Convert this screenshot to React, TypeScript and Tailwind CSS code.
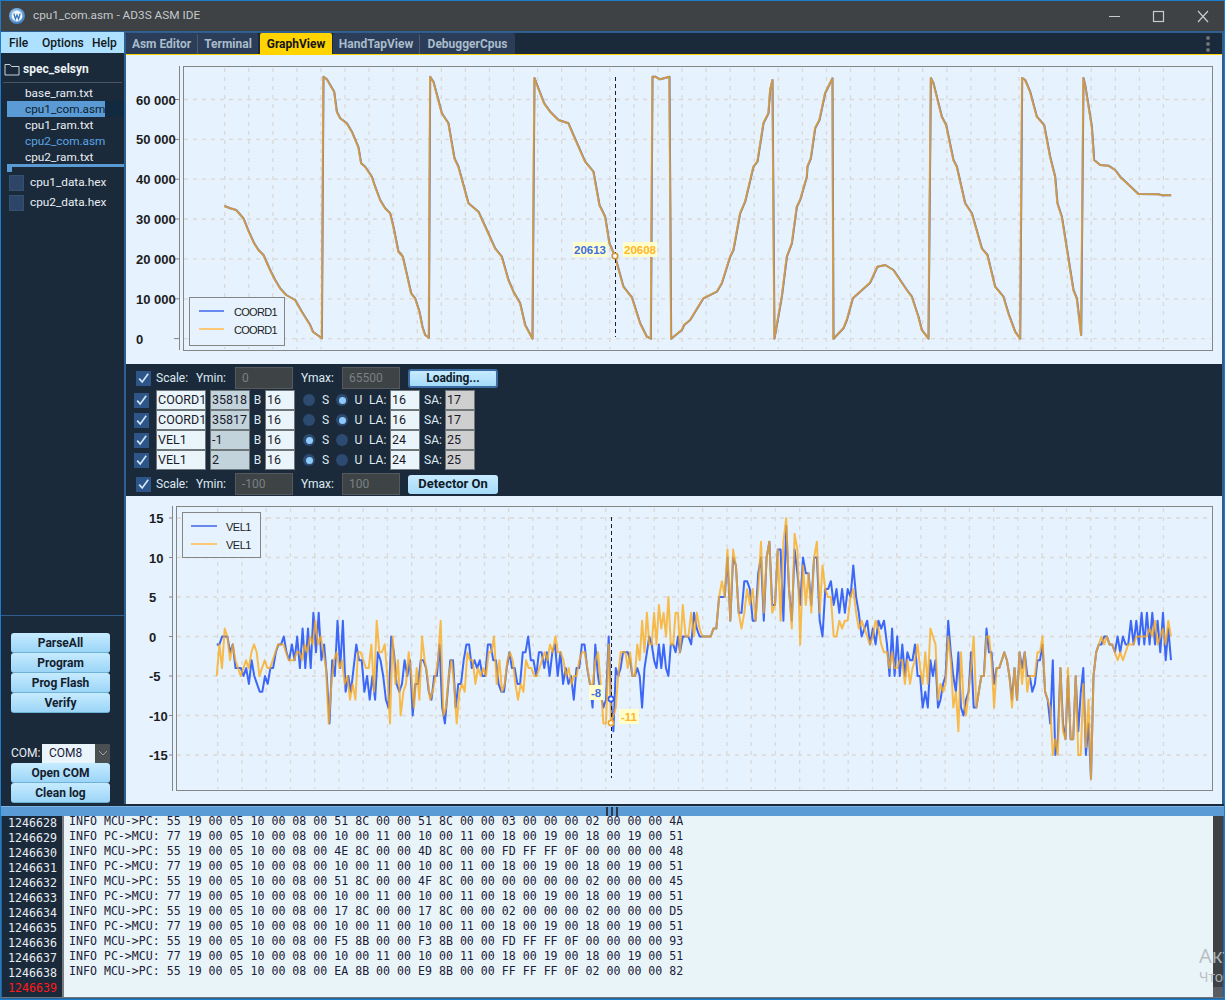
const UI = "font-['Roboto','Noto_Sans',sans-serif]";

// ---------- top chart trace (read from the reference) ----------
const T1: [number, number, number[]][] = [
  [130, 60, [283,438,300,445,318,450,340,475,356,515,372,550,385,570,400,585,420,630,435,660,450,685,468,705,495,720,515,755,540,795,548,815,575,835,580,50,590,58,612,95,620,155,630,175,650,190,665,215,685,262,693,310,705,320,725,350,735,380,750,420,765,445,780,460,790,500,805,575,818,590]],
  [400, 60, [0,578,8,590,33,700,45,715,58,755,67,800,75,825,86,833,90,50,100,65,125,160,145,190,163,295,175,320,190,375,205,430,235,455,260,510,285,565,305,590,325,660,340,695,360,730,375,795,397,836,403,54,432,130,450,155,475,180,505,190,520,225,555,305,580,335,598,435,615,470,628,550,645,590,670,680,695,712,720,790,740,830,752,836,757,50,765,50,780,58,808,50,813,836,845,810,852,795,870,780,910,715,950,695,965,670,990,590,1000,570,1020,460,1035,425,1060,320,1072,305,1090,190,1105,160,1110,90,1117,60,1123,836,1145,710,1160,590,1175,550,1190,440,1200,420]],
  [790, 60, [50,350,52,320,62,295,75,205,88,180,105,100,127,55,130,836,160,805,170,780,188,715,240,668,262,620,285,615,310,630,350,690,365,710,385,770,395,810,415,836,422,54,430,70,455,170,468,195,490,300,500,320,525,430,545,460,575,565,592,585,615,680,640,710,655,760,675,815,690,836,696,54,705,60,720,95,740,170,762,195,780,290,795,350,802,430,815,470,850,690,860,715,873,825,880,54,885,75,905,200,912,300,930,315,955,317,975,330,990,350,1045,402,1105,403,1115,406,1143,406]],
];
const topPts = T1.flatMap(([ox, oy, a]) => {
  const out: string[] = [];
  for (let i = 0; i < a.length; i += 2) out.push(`${(ox + a[i] / 3).toFixed(1)},${(oy + a[i + 1] / 3).toFixed(1)}`);
  return out;
}).join(" ");

// ---------- bottom chart traces ----------
const blueA = [-1,-1,0,0,0,-2,-1,-4,-4,-4,-5,-4,-6,-3,-5,-6,-7,-7,-5,-6,-4,-4,-2,-1,-1,0,-2,-3,-1,-3,0,-4,1,-4,1,-4,3,-2,3,-3,-1,-5,-11,-3,-5,2,-4,2,-7,-5,-7,-4,-1,-3,-3,-7,-5,-8,-5,-8,-2,-3,-5,-8,-9,0,-2,-6,-7,-6,-3,-5,-3,-10,-6,-6,-3,-3,-4,-7,-8,-5,-5,-1,-9,-11,-7,-3,-3,-9,-6,-6,-3,-1,-1,-4,-3,-4,-3,-5,-5,-1,-1,-3,-3,-6,-7,-7,-4,-2,-4,-4,-6,-6,-2,-2,0,-3,-3,-5,-2,-2,-4,-2,-5,-2,-1,-5,-2,-6,-4,-6,-5,-8,-4,-4,-1,-1,-4,-6,-9,-1,-5,-7,-9,-8,0];
const orangeA = [-5,-1,-4,1,0,-3,-1,-3,-4,-5,-4,-3,-4,-2,-1,-2,-5,-4,-3,-4,-4,-3,-2,-1,-1,-1,-2,-3,-3,-3,-2,-2,-3,-1,-2,0,-1,2,-1,0,-2,-4,-11,-6,-3,-2,-4,-3,-6,-5,-8,-6,-8,-2,-2,-3,-4,-4,-1,-7,2,-2,-2,-1,-5,-11,0,-6,-3,-10,-7,-6,-2,-5,-9,-4,-8,0,-3,-5,-8,-7,-5,-3,2,-10,-9,-5,-3,-6,-11,-7,-6,-7,-2,-3,-3,-6,-4,-5,-4,-5,-2,-2,0,-6,-3,-7,-6,-3,-2,-3,-6,-8,-6,-7,-3,-4,-4,-5,-5,-4,-3,-2,-3,-1,-2,0,-2,-2,-3,-5,-4,-6,-5,-5,-3,-2,-2,-4,-6,-6,-3,-2,-6,-11,-11,-1];
const blueB = [-8,-12,-4,-5,-4,-2,-2,-2,-3,-5,-5,-4,-5,-9,-4,-2,0,-1,-3,-4,-1,-4,-1,-4,-5,-1,-1,-2,0];
const orangeB = [-11,-10,-9,-5,-2,-2,-2,-4,-2,-5,-5,-1,-3,2,-2,3,-1,-1,3,-1,4,1,3,0,5,-1,-1,3,3];
const blueC1 = [-2,0,0,0,-1,3,1,0,0,0,0,0,1,1,5,5,5,10,2,10,9,3,3,7,7,6,2,2,8,10,2,10,12,4,4,11,11,2,14,6,2,11,8,4,10,8,8,4,10,10,2,0,6,6,7,4,6,3,6,3,6,5,9,5,3,0,1,2,-1,1,-1,2,1,2];
const blueC2 = [-1,-5,1,-5,0,-5,-1,-5,-2,-3,-3,-1,-5,-5,-9,-7,-9,-3,-5,-3,-9,-8,-6,-5,2,-2,-5,-7,-2,-9,-10,-8,-7,-2,-9,-9,-7,-5,-5,1,-2,-2,-6,-4,-4,-3,-2,-3,-5,-8,-4,-8,-2,-4,-2,-5,-5,-7,-6,-3,-3,-1,-7,-8,-11,-3,-15,-13,-4,-11,-13,-5,-13,-13,-5,-12,-7,-4,-15,-11,-18];
const blueC3 = [-5,-2,-1,-1,0,0,-1,-1,-2,0,-2,0,-1,-1,2,-1,2,-1,3,-1,3,-1,3,-1,2,-2,3,-3,1,-3];
const orangeC1 = [-2,4,0,0,3,0,3,1,0,0,0,0,1,1,5,7,5,11,2,11,9,3,1,3,6,4,6,2,6,12,3,10,12,3,4,11,2,12,15,6,1,13,11,-1,9,4,8,3,10,12,3,9,6,5,5,0,0,2,1,2,2,5,6,3,1,2,1,0,-1,0,2,1,-1,-2];
const orangeC2 = [-2,-4,-2,-4,-4,-3,-3,-6,-3,-6,-4,-3,-1,-4,-6,-2,-6,1,0,-1,-8,-6,-7,-6,0,-3,-9,-7,-12,-2,-8,-10,-7,-4,0,-9,-7,-5,-5,0,0,-3,-9,-4,-4,-3,-2,-3,-5,-9,-4,-8,-2,-6,-2,-7,-5,-5,-5,-2,-2,0,-7,-8,-9,-15,-13,-15,-4,-12,-13,-4,-13,-13,-5,-15,-15,-6,-14,-8,-18];
const orangeC3 = [-5,-2,-1,0,-1,0,-1,-1,-2,-3,-2,-3,-2,-1,-1,-1,0,0,0,0,0,1,0,2,-1,0,1,-1,2,0];

const vy = (v: number) => (636.5 - 7.9 * v).toFixed(1);
const seq = (x0: number, x1: number, a: number[]) =>
  a.map((v, i) => `${(x0 + (i * (x1 - x0)) / (a.length - 1)).toFixed(1)},${vy(v)}`);
const bluePts = [...seq(216.7, 608.7, blueA), ...seq(611, 678, blueB), ...seq(680, 884, blueC1), ...seq(887, 1091, blueC2), ...seq(1093.5, 1171, blueC3)].join(" ");
const orangePts = [...seq(216.7, 608.7, orangeA), ...seq(611, 678, orangeB), ...seq(680, 884, orangeC1), ...seq(887, 1091, orangeC2), ...seq(1093.5, 1171, orangeC3)].join(" ");

// ---------- shared pieces ----------
const Check = ({ size = 15 }: { size?: number }) => (
  <span className="shrink-0 flex items-center justify-center bg-[#2d5587]" style={{ width: size, height: size }}>
    <svg width={size} height={size} viewBox="0 0 15 15" fill="none">
      <path d="M3.2 7.6 L6.2 11 L12.2 2.8" stroke="#cfe6fb" strokeWidth="1.7" />
    </svg>
  </span>
);

const Radio = ({ on }: { on?: boolean }) => (
  <span className="shrink-0 w-3 h-3 rounded-full bg-[#2d4a70] flex items-center justify-center">
    {on && <span className="w-[7px] h-[7px] rounded-full bg-[#8ec9fb]" />}
  </span>
);

const SideBtn = ({ label }: { label: string }) => (
  <div className="w-[99px] h-5 rounded-[3px] border-b border-[#6fb2d8] bg-gradient-to-b from-[#c6ebff] to-[#9bd5f7] flex items-center justify-center text-[12px] font-bold text-[#14202e] leading-none">
    {label}
  </div>
);

const Field = ({ w, text, cls }: { w: string; text: string; cls: string }) => (
  <div className={`${w} h-5 shrink-0 border border-[#6f7679] pl-[1px] text-[12.5px] leading-[18px] text-[#1a1a2a] overflow-hidden whitespace-nowrap ${cls}`}>
    {text}
  </div>
);

const SigRow = ({ name, val, signed, la, sa }: { name: string; val: string; signed?: boolean; la: string; sa: string }) => (
  <div className="flex items-center h-5 text-[12px] text-[#dfeaf2]">
    <span className="w-[8px]" />
    <Check />
    <span className="w-[7px]" />
    <Field w="w-[50px]" text={name} cls="bg-[#eaf5fb]" />
    <span className="w-[4px]" />
    <Field w="w-[40px]" text={val} cls="bg-[#c3d3dc]" />
    <span className="w-[15px] text-center">B</span>
    <Field w="w-[30px]" text="16" cls="bg-[#eaf5fb]" />
    <span className="w-[8px]" />
    <Radio on={signed} />
    <span className="w-[21px] text-center">S</span>
    <Radio on={!signed} />
    <span className="w-[21px] text-center">U</span>
    <span className="w-[21px]">LA:</span>
    <Field w="w-[30px]" text={la} cls="bg-[#eaf5fb]" />
    <span className="w-[4px]" />
    <span className="w-[21px]">SA:</span>
    <Field w="w-[30px]" text={sa} cls="bg-[#cfcfcf]" />
  </div>
);

const ScaleRow = ({ min, max, btn, loading }: { min: string; max: string; btn: string; loading?: boolean }) => (
  <div className="flex items-center h-[22px] text-[12px] text-[#dfeaf2]">
    <span className="w-[10px]" />
    <Check />
    <span className="w-[5px]" />
    <span className="w-[40px]">Scale:</span>
    <span className="w-[39px]">Ymin:</span>
    <div className="w-[58px] h-[22px] bg-[#3e4346] border border-[#55595c] pl-[6px] leading-5 text-[#7b8083]">{min}</div>
    <span className="w-[8px]" />
    <span className="w-[41px]">Ymax:</span>
    <div className="w-[58px] h-[22px] bg-[#3e4346] border border-[#55595c] pl-[6px] leading-5 text-[#7b8083]">{max}</div>
    <span className="w-[8px]" />
    <div className={`w-[90px] h-[19px] rounded-[3px] flex items-center justify-center font-bold text-[#101a28] bg-gradient-to-b from-[#c6ebff] to-[#a5dbf9] ${loading ? "border-2 border-[#3b6ba3] text-[12px]" : "text-[13px]"}`}>
      {btn}
    </div>
  </div>
);

const Grid = ({ xs, ys, y0, y1, x0, x1 }: { xs: number[]; ys: number[]; y0: number; y1: number; x0: number; x1: number }) => (
  <g stroke="#dcd8d4" strokeWidth="1.3" strokeDasharray="4 5">
    {xs.map((x) => <line key={`x${x}`} x1={x} x2={x} y1={y0} y2={y1} />)}
    {ys.map((y) => <line key={`y${y}`} x1={x0} x2={x1} y1={y} y2={y} />)}
  </g>
);

const Tip = ({ x, y, w, text, color }: { x: number; y: number; w: number; text: string; color: string }) => (
  <g>
    <rect x={x} y={y} width={w} height={15} fill="#ffffcc" />
    <text x={x + w / 2} y={y + 11.5} textAnchor="middle" fontFamily="'Liberation Sans',sans-serif" fontWeight="700" fontSize="11.5" fill={color}>{text}</text>
  </g>
);

const axisFont = "'Liberation Sans',sans-serif";
const BLUE = "#2450e0";
const ORANGE = "#fbab1a";

const TopChart = () => {
  const xs = Array.from({ length: 40 }, (_, i) => 224.7 + i * 24.07);
  const ys = [99.5, 139.4, 179.2, 219, 258.9, 298.8, 338.6];
  const labels = ["60 000", "50 000", "40 000", "30 000", "20 000", "10 000", "0"];
  return (
    <svg className="block" width="1096" height="309" viewBox="126 55 1096 309">
      <rect x="126" y="55" width="1096" height="309" fill="#e6f3ff" />
      <Grid xs={xs} ys={ys} y0={68} y1={349} x0={184} x1={1211} />
      <rect x="183.5" y="66.5" width="1029" height="284" fill="none" stroke="#858585" strokeWidth="1" />
      <line x1="179.5" x2="179.5" y1="66" y2="350" stroke="#858585" />
      {ys.map((y, i) => (
        <g key={y}>
          <line x1="174" x2="179" y1={y} y2={y} stroke="#858585" />
          <text x="136" y={y + 5} fontFamily={axisFont} fontWeight="700" fontSize="13" fill="#1c1c1c">{labels[i]}</text>
        </g>
      ))}
      <polyline points={topPts} transform="translate(0.2 0)" fill="none" stroke={BLUE} strokeOpacity="0.9" strokeWidth="2" strokeLinejoin="round" />
      <polyline points={topPts} fill="none" stroke={ORANGE} strokeOpacity="0.76" strokeWidth="2" strokeLinejoin="round" />
      <line x1="615.5" x2="615.5" y1="77" y2="337" stroke="#1c1c2c" strokeDasharray="4 3" />
      <circle cx="615" cy="256" r="2.8" fill="#fff" stroke="#d19434" strokeWidth="1.6" />
      <Tip x={573} y={242} w={34} text="20613" color="#3f6de4" />
      <Tip x={623} y={242} w={34} text="20608" color="#ffb52a" />
      <rect x="189.5" y="297.5" width="95" height="48" fill="#e6f3ff" stroke="#858585" />
      <line x1="199" x2="224" y1="311" y2="311" stroke="#5a7cf0" strokeWidth="1.8" />
      <line x1="199" x2="224" y1="329" y2="329" stroke="#ffc266" strokeWidth="1.8" />
      <text x="234" y="316" fontFamily={axisFont} fontSize="11" letterSpacing="-0.7" fill="#222">COORD1</text>
      <text x="234" y="334" fontFamily={axisFont} fontSize="11" letterSpacing="-0.7" fill="#222">COORD1</text>
    </svg>
  );
};

const BottomChart = () => {
  const xs = Array.from({ length: 40 }, (_, i) => 217.7 + i * 24.25);
  const vals = [15, 10, 5, 0, -5, -10, -15];
  return (
    <svg className="block" width="1096" height="308" viewBox="126 496 1096 308">
      <rect x="126" y="496" width="1096" height="308" fill="#e6f3ff" />
      <Grid xs={xs} ys={vals.map((v) => 636.5 - 7.9 * v)} y0={508} y1={789} x0={177} x1={1211} />
      <rect x="176.5" y="506.5" width="1036" height="284" fill="none" stroke="#858585" />
      <line x1="172.5" x2="172.5" y1="506" y2="791" stroke="#858585" />
      {vals.map((v) => (
        <g key={v}>
          <line x1="169" x2="172" y1={636.5 - 7.9 * v} y2={636.5 - 7.9 * v} stroke="#858585" />
          <text x="149" y={636.5 - 7.9 * v + 5} fontFamily={axisFont} fontWeight="700" fontSize="13" fill="#1c1c1c">{v}</text>
        </g>
      ))}
      <polyline points={bluePts} fill="none" stroke="#2a58f5" strokeOpacity="0.9" strokeWidth="2" strokeLinejoin="round" />
      <polyline points={orangePts} fill="none" stroke={ORANGE} strokeOpacity="0.78" strokeWidth="2" strokeLinejoin="round" />
      <line x1="611.5" x2="611.5" y1="517" y2="778" stroke="#1c1c2c" strokeDasharray="4 3" />
      <circle cx="611" cy="699" r="2.6" fill="#fff" stroke="#2c5cf5" strokeWidth="1.6" />
      <circle cx="611" cy="723" r="2.6" fill="#fff" stroke="#f0a52a" strokeWidth="1.6" />
      <Tip x={589} y={685} w={14} text="-8" color="#3f6de4" />
      <Tip x={619} y={709} w={20} text="-11" color="#ffb52a" />
      <rect x="182.5" y="512.5" width="78" height="45" fill="#e6f3ff" stroke="#858585" />
      <line x1="191" x2="217" y1="526" y2="526" stroke="#5a7cf0" strokeWidth="1.8" />
      <line x1="191" x2="217" y1="544" y2="544" stroke="#ffc266" strokeWidth="1.8" />
      <text x="226" y="531" fontFamily={axisFont} fontSize="11" letterSpacing="-0.5" fill="#222">VEL1</text>
      <text x="226" y="549" fontFamily={axisFont} fontSize="11" letterSpacing="-0.5" fill="#222">VEL1</text>
    </svg>
  );
};

const LOG = [
  ["1246628", "INFO MCU->PC: 55 19 00 05 10 00 08 00 51 8C 00 00 51 8C 00 00 03 00 00 00 02 00 00 00 4A"],
  ["1246629", "INFO PC->MCU: 77 19 00 05 10 00 08 00 10 00 11 00 10 00 11 00 18 00 19 00 18 00 19 00 51"],
  ["1246630", "INFO MCU->PC: 55 19 00 05 10 00 08 00 4E 8C 00 00 4D 8C 00 00 FD FF FF 0F 00 00 00 00 48"],
  ["1246631", "INFO PC->MCU: 77 19 00 05 10 00 08 00 10 00 11 00 10 00 11 00 18 00 19 00 18 00 19 00 51"],
  ["1246632", "INFO MCU->PC: 55 19 00 05 10 00 08 00 51 8C 00 00 4F 8C 00 00 00 00 00 00 02 00 00 00 45"],
  ["1246633", "INFO PC->MCU: 77 19 00 05 10 00 08 00 10 00 11 00 10 00 11 00 18 00 19 00 18 00 19 00 51"],
  ["1246634", "INFO MCU->PC: 55 19 00 05 10 00 08 00 17 8C 00 00 17 8C 00 00 02 00 00 00 02 00 00 00 D5"],
  ["1246635", "INFO PC->MCU: 77 19 00 05 10 00 08 00 10 00 11 00 10 00 11 00 18 00 19 00 18 00 19 00 51"],
  ["1246636", "INFO MCU->PC: 55 19 00 05 10 00 08 00 F5 8B 00 00 F3 8B 00 00 FD FF FF 0F 00 00 00 00 93"],
  ["1246637", "INFO PC->MCU: 77 19 00 05 10 00 08 00 10 00 11 00 10 00 11 00 18 00 19 00 18 00 19 00 51"],
  ["1246638", "INFO MCU->PC: 55 19 00 05 10 00 08 00 EA 8B 00 00 E9 8B 00 00 FF FF FF 0F 02 00 00 00 82"],
  ["1246639", ""],
];

const FILES = [
  { n: "base_ram.txt" },
  { n: "cpu1_com.asm", sel: true },
  { n: "cpu1_ram.txt" },
  { n: "cpu2_com.asm", blue: true },
  { n: "cpu2_ram.txt" },
];

const Tab = ({ label, w, active, sep }: { label: string; w: string; active?: boolean; sep?: boolean }) => (
  <div className={`${w} h-[21px] pt-[1px] flex items-center justify-center text-[12px] font-bold whitespace-nowrap rounded-t-[2px] ${active ? "bg-[#ffd400] text-[#141414]" : "bg-[#2b3d58] text-[#a9bccb]"} ${sep ? "border-r border-[#4b5c73]" : ""}`}>
    {label}
  </div>
);

export default function App() {
  return (
    <div className={`relative w-[1225px] h-[1000px] overflow-hidden border border-[#1a7ccb] bg-[#2f5f8f] ${UI}`}>
      {/* title bar */}
      <div className="h-[30px] bg-[#3e4245] flex items-center text-[#c4c8ca] pl-[7px]">
        <svg width="18" height="18" viewBox="0 0 18 18">
          <defs>
            <radialGradient id="wi" cx="0.4" cy="0.35" r="0.7">
              <stop offset="0" stopColor="#a8d6fa" />
              <stop offset="1" stopColor="#3a7cc0" />
            </radialGradient>
          </defs>
          <circle cx="9" cy="9" r="8" fill="url(#wi)" />
          <circle cx="9" cy="9" r="5.4" fill="#f2f6fa" />
          <path d="M5.8 6.5 L7.4 12 L9 8 L10.6 12 L12.2 6.5" fill="none" stroke="#3a7cc0" strokeWidth="1.3" />
        </svg>
        <span className="ml-[7px] text-[11.8px] leading-none whitespace-nowrap">cpu1_com.asm - AD3S ASM IDE</span>
        <span className="flex-1" />
        <svg width="113" height="30" viewBox="0 0 113 30" className="mr-[2px]" fill="none" stroke="#c9cccd">
          <line x1="0" x2="11" y1="15.5" y2="15.5" />
          <rect x="44.5" y="10.5" width="10" height="10" strokeWidth="1.2" />
          <path d="M89 10 L99 21 M99 10 L89 21" strokeWidth="1.2" />
        </svg>
      </div>
      <div className="h-[2px]" />

      <div className="flex h-[771px]">
        {/* left column */}
        <div className="w-[123px] shrink-0 flex flex-col -mt-[1px]">
          <div className="h-[21px] shrink-0 bg-[#aee0ff] flex items-center pl-[8px] text-[12px] font-medium text-[#101820] leading-none">
            <span className="w-[33px]">File</span>
            <span className="w-[50px]">Options</span>
            <span>Help</span>
          </div>
          <div className="h-[563px] shrink-0 bg-[#1b2a3b] border-b border-[#2f5f8f] flex flex-col text-[11.8px] text-[#e8eef3]">
            <div className="h-[30px] mx-[2px] pt-[2px] border-b border-[#4c555e] flex items-center pl-[1px] shrink-0">
              <svg width="16" height="14" viewBox="0 0 16 14" fill="none" stroke="#c8d0d6">
                <path d="M1 2.5 H6 L7.5 4.5 H15 V13 H1 Z" />
              </svg>
              <span className="ml-[3px] font-bold text-[12px] text-[#eef3f6]">spec_selsyn</span>
            </div>
            <div className="pt-[2px]">
              {FILES.map((f) => (
                <div key={f.n} className={`h-4 ml-[6px] flex items-center ${f.sel ? "bg-[#112a40]" : ""}`}>
                  <span className={`leading-4 pl-[18px] ${f.sel ? "bg-[#5b9bd5] text-[#10202e] w-[98px]" : ""} ${f.blue ? "text-[#5aa5e4]" : ""}`}>{f.n}</span>
                </div>
              ))}
            </div>
            <div className="ml-[6px] -mt-[1px] h-[8px] shrink-0">
              <div className="h-[3px] bg-[#5b9bd5]" />
              <div className="w-[5px] h-[5px] bg-[#5b9bd5]" />
            </div>
            <div className="pl-[8px] flex flex-col gap-[4px] mt-[3px]">
              {["cpu1_data.hex", "cpu2_data.hex"].map((n) => (
                <div key={n} className="flex items-center h-4">
                  <span className="w-[15px] h-4 bg-[#2d4667] border border-[#34506f]" />
                  <span className="ml-[6px]">{n}</span>
                </div>
              ))}
            </div>
          </div>
          <div className="flex-1 bg-[#1b2a3b] flex flex-col items-center pt-[17px]">
            <div className="flex flex-col pr-[4px]">
              <SideBtn label="ParseAll" />
              <SideBtn label="Program" />
              <SideBtn label="Prog Flash" />
              <SideBtn label="Verify" />
              <div className="h-[30px]" />
              <div className="flex items-center h-[20px] text-[12px] text-[#e8eef3]">
                <span className="w-[31px]">COM:</span>
                <div className="w-[53px] h-[19px] bg-[#eaf5fb] text-[#1a1a3a] pl-[7px] leading-[19px]">COM8</div>
                <div className="w-[15px] h-[19px] bg-[#4a4f52] flex items-center justify-center">
                  <svg width="10" height="6" viewBox="0 0 10 6" fill="none" stroke="#9ba1a4"><path d="M1 1 L5 5 L9 1" /></svg>
                </div>
              </div>
              <SideBtn label="Open COM" />
              <SideBtn label="Clean log" />
            </div>
          </div>
        </div>

        <div className="w-[2px] shrink-0" />

        {/* right column */}
        <div className="w-[1096px] shrink-0 flex flex-col">
          <div className="h-[22px] bg-[#1b2a3b] border-b border-[#ffd400] flex items-end relative shrink-0">
            <Tab label="Asm Editor" w="w-[72px]" sep />
            <Tab label="Terminal" w="w-[60px]" />
            <span className="w-[2px]" />
            <Tab label="GraphView" w="w-[72px]" active />
            <span className="w-[1px]" />
            <Tab label="HandTapView" w="w-[87px]" sep />
            <Tab label="DebuggerCpus" w="w-[95px]" />
            <div className="absolute right-[12px] top-[3px] flex flex-col gap-[2px]">
              <span className="w-1 h-1 rounded-full bg-[#6d7276]" />
              <span className="w-1 h-1 rounded-full bg-[#6d7276]" />
              <span className="w-1 h-1 rounded-full bg-[#6d7276]" />
            </div>
          </div>
          <TopChart />
          <div className="h-[132px] bg-[#1b2a3b] flex flex-col pt-[3px] shrink-0">
            <ScaleRow min="0" max="65500" btn="Loading..." loading />
            <div className="h-[1px]" />
            <SigRow name="COORD1" val="35818" la="16" sa="17" />
            <SigRow name="COORD1" val="35817" la="16" sa="17" />
            <SigRow name="VEL1" val="-1" signed la="24" sa="25" />
            <SigRow name="VEL1" val="2" signed la="24" sa="25" />
            <div className="h-[3px]" />
            <ScaleRow min="-100" max="100" btn="Detector On" />
          </div>
          <BottomChart />
        </div>
      </div>

      {/* splitter */}
      <div className="h-[2px] bg-[#1b2a3b]" />
      <div className="h-[10px] bg-[#5b9bd5] border-t border-[#7db3e2] flex items-center justify-center gap-[3px] pr-[2px]">
        <span className="w-[2px] h-[9px] bg-[#2a3a4c]" />
        <span className="w-[2px] h-[9px] bg-[#2a3a4c]" />
        <span className="w-[2px] h-[9px] bg-[#2a3a4c]" />
      </div>

      {/* log */}
      <div className="h-[182px] flex border-b border-[#6f7679] font-['DejaVu_Sans_Mono',monospace] text-[11.6px] leading-[15px] overflow-hidden">
        <div className="w-[62px] ml-[1px] shrink-0 bg-[#1b2a3b] border-r-2 border-[#777c80] overflow-hidden">
          <div className="pl-[6px]">
            {LOG.map(([n, _], i) => (
              <div key={n} className={`h-[15px] ${i === 11 ? "text-[#ff1a1a]" : "text-[#e8eef3]"}`}>{n}</div>
            ))}
          </div>
        </div>
        <div className="flex-1 bg-[#e9f4f9] overflow-hidden">
          <div className="-mt-[2px] pl-[5px] text-[#1b1b3a] whitespace-pre">
            {LOG.map(([n, t]) => <div key={n} className="h-[15px]">{t}</div>)}
          </div>
        </div>
        <div className="w-[10px] shrink-0 bg-[#3e4245] flex flex-col justify-end mr-[1px]">
          <div className="h-[10px] bg-[#5a5e62]" />
        </div>
      </div>

      {/* OS watermark over the page */}
      <div className="absolute left-[1198px] top-[942px] w-[27px] overflow-hidden text-[#b6babc] font-['Noto_Sans',sans-serif] whitespace-nowrap opacity-90 pointer-events-none">
        <div className="text-[20px] leading-[26px]">Активация</div>
        <div className="text-[14px] leading-[20px] -mt-[2px]">Чтобы</div>
      </div>
    </div>
  );
}
